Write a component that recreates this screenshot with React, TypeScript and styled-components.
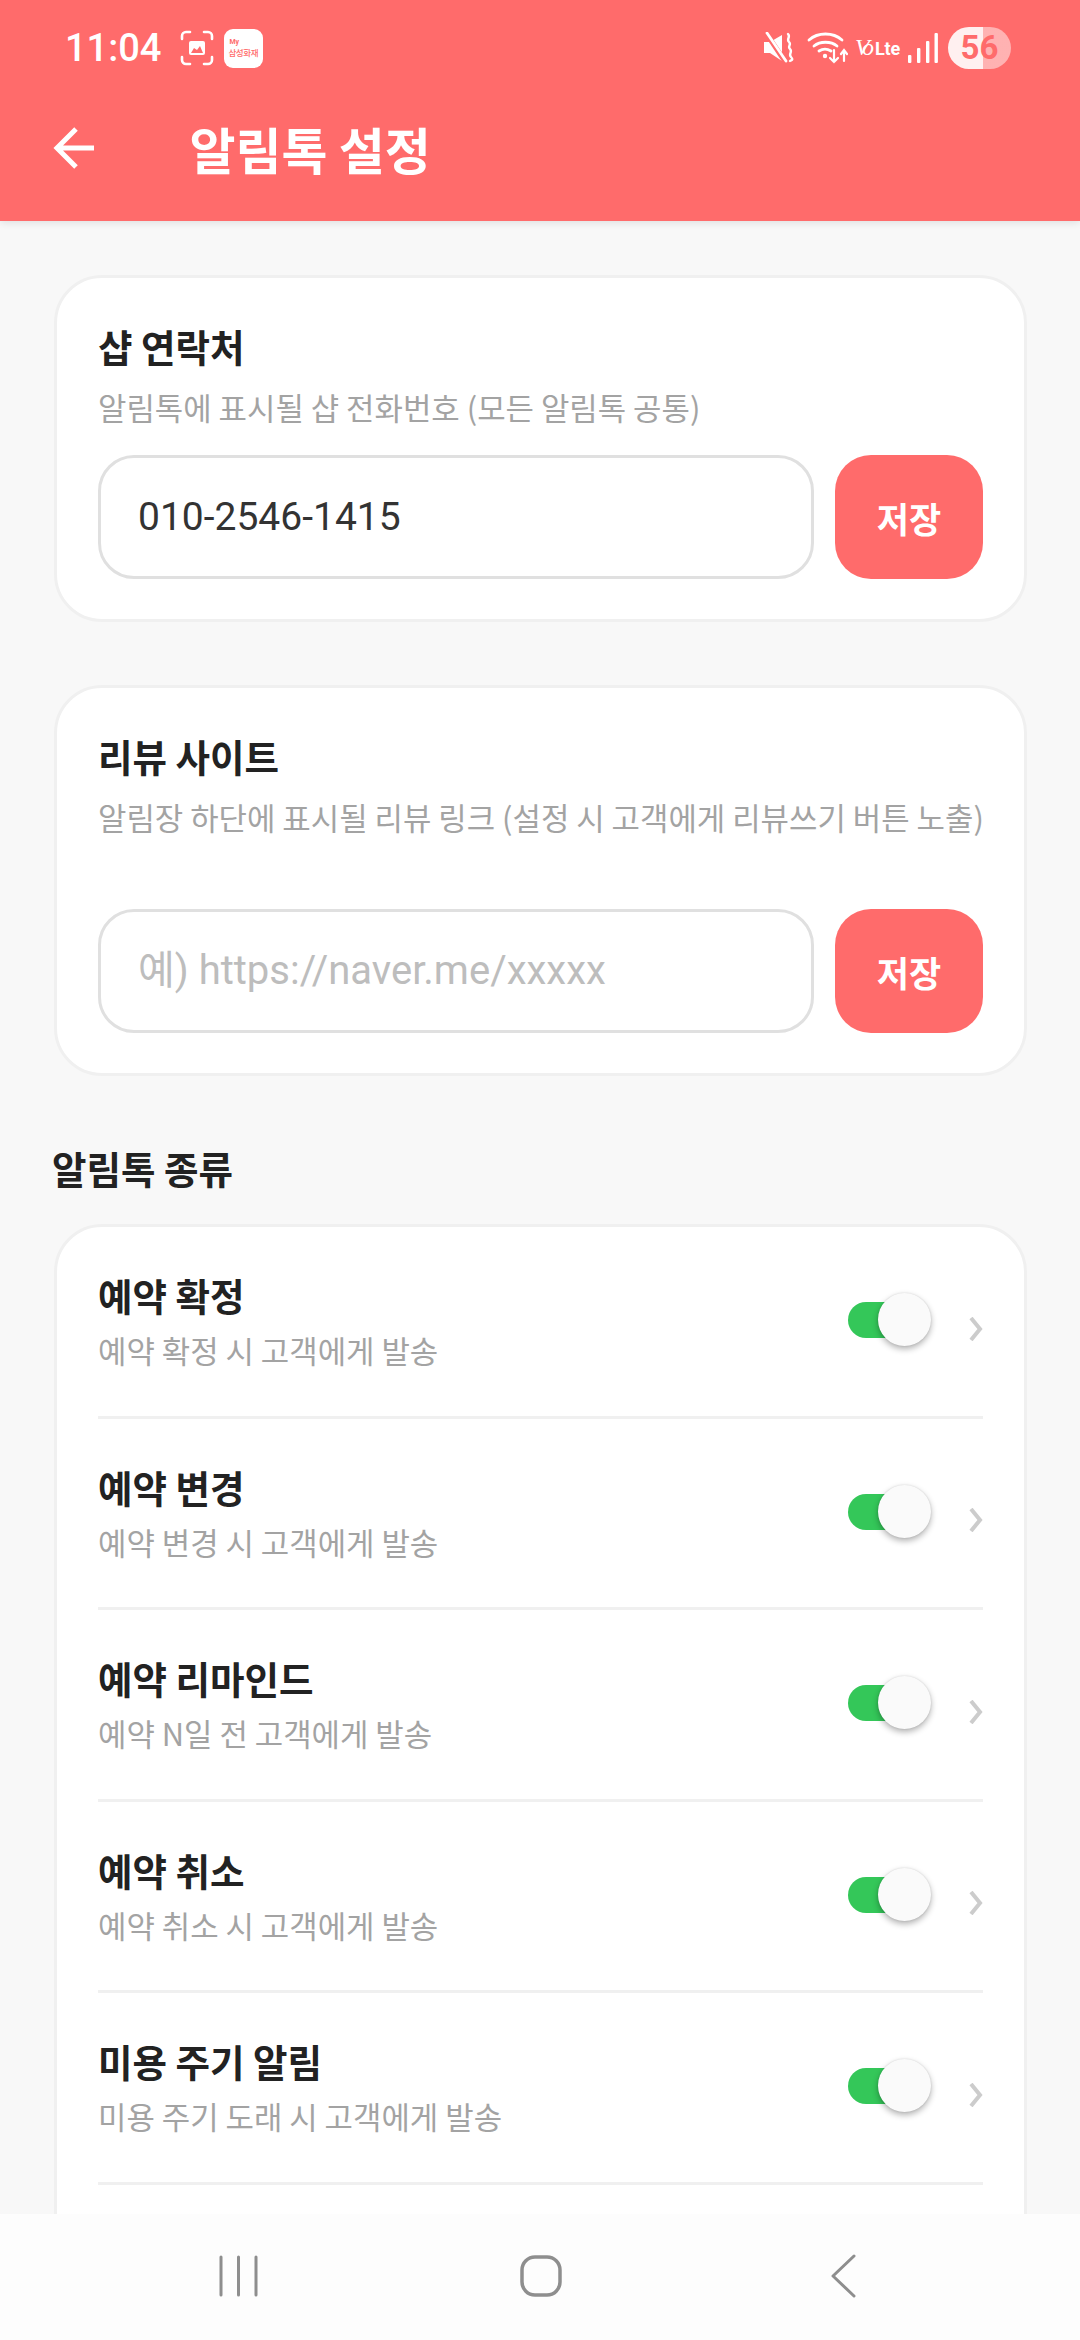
import styled, { createGlobalStyle } from "styled-components";

const CORAL = "#ff6b6b";
const KR = `"Noto Sans CJK KR", Roboto, sans-serif`;
const LATIN = `Roboto, "Noto Sans CJK KR", sans-serif`;

const GlobalStyle = createGlobalStyle`
  html, body {
    margin: 0;
    padding: 0;
    background: #f8f8f8;
  }
  * {
    box-sizing: border-box;
  }
`;

const Screen = styled.div`
  width: 1080px;
  height: 2340px;
  display: flex;
  flex-direction: column;
  overflow: hidden;
  background: #f8f8f8;
  font-family: ${KR};
`;

const Header = styled.header`
  flex: none;
  position: relative;
  z-index: 2;
  height: 221px;
  background: ${CORAL};
  color: #fff;
  box-shadow: 0 2px 8px rgba(0, 0, 0, 0.1);
`;

const StatusBar = styled.div`
  height: 96px;
  padding: 0 69px 0 65px;
  display: flex;
  align-items: center;
  justify-content: space-between;
`;

const StatusGroup = styled.div`
  display: flex;
  align-items: center;
`;

const Clock = styled.span`
  font: 500 38px/48px ${LATIN};
  margin-right: 19px;
`;

const AppBadge = styled.div`
  width: 39px;
  height: 39px;
  margin-left: 10px;
  border-radius: 9px;
  background: #fff;
  color: ${CORAL};
  display: flex;
  flex-direction: column;
  justify-content: center;
  padding-left: 4px;
`;

const BadgeMy = styled.span`
  font: 700 7px/8px ${LATIN};
  padding-left: 1px;
`;

const BadgeName = styled.span`
  font-size: 8.500px;
  font-weight: 500;
  line-height: 12px;
  letter-spacing: -0.4px;
  white-space: nowrap;
`;

const StatusSvg = styled.svg<{ $left?: number }>`
  flex: none;
  display: block;
  margin-left: ${(p) => p.$left ?? 0}px;
`;

const Volte = styled.span`
  flex: none;
  width: 42px;
  margin: 0 11px 0 7px;
  font: 700 18px/24px ${LATIN};
  white-space: nowrap;
  letter-spacing: -0.2px;
  em {
    font: italic 400 24px/24px "Liberation Serif", serif;
    letter-spacing: -5px;
    margin-right: 6px;
  }
`;

const Battery = styled.div`
  width: 63px;
  height: 42px;
  margin-left: 10px;
  border-radius: 21px;
  background: linear-gradient(90deg, rgba(255, 255, 255, 0.9) 55.500%, rgba(255, 255, 255, 0.48) 55.500%);
  color: ${CORAL};
  display: flex;
  align-items: center;
  justify-content: center;
  font: 700 33px/42px ${LATIN};
`;

const AppBar = styled.div`
  height: 103px;
  padding-left: 53px;
  display: flex;
  align-items: center;
  gap: 94.500px;
`;

const PageTitle = styled.h1`
  margin: 0;
  font-size: 50px;
  line-height: 70px;
  font-weight: 700;
  white-space: nowrap;
`;

const Content = styled.main`
  flex: 1;
  min-height: 0;
  overflow: hidden;
  padding: 54px 53px 0 54px;
`;

const Card = styled.section`
  background: #fff;
  border: 3px solid #f0f0f0;
  border-radius: 48px;
  padding: 44px 41px 40px;
  & + & {
    margin-top: 63px;
  }
`;

const CardTitle = styled.h2`
  margin: 0;
  font-size: 37.500px;
  line-height: 48px;
  font-weight: 700;
  color: #222;
`;

const CardHint = styled.p<{ $gap: number }>`
  margin: 15px 0 ${(p) => p.$gap}px;
  font-size: 30.900px;
  line-height: 44px;
  color: #a3a3a3;
  white-space: nowrap;
`;

const InputRow = styled.div`
  display: flex;
  gap: 21px;
`;

const TextInput = styled.input`
  flex: 1;
  min-width: 0;
  height: 124px;
  padding: 0 37px;
  border: 3px solid #e0e0e0;
  border-radius: 36px;
  outline: none;
  background: #fff;
  color: #333;
  font: 400 39px ${LATIN};
  &::placeholder {
    color: #bdbdbd;
    font-size: 40px;
    opacity: 1;
  }
`;

const SaveButton = styled.button`
  flex: none;
  width: 148px;
  height: 124px;
  border: 0;
  border-radius: 36px;
  background: ${CORAL};
  color: #fff;
  font: 700 35px ${KR};
`;

const SectionTitle = styled.h3`
  margin: 68px 0 32px -2px;
  font-size: 37.500px;
  line-height: 48px;
  font-weight: 700;
  color: #222;
`;

const ListCard = styled.section`
  background: #fff;
  border: 3px solid #f0f0f0;
  border-radius: 48px;
  padding: 0 41px 200px;
`;

const Row = styled.div`
  height: 191.500px;
  border-bottom: 3px solid #f0f0f0;
  display: flex;
  align-items: center;
`;

const RowText = styled.div`
  flex: 1;
  padding-top: 1px;
`;

const RowTitle = styled.div`
  font-size: 37.500px;
  line-height: 48px;
  font-weight: 700;
  color: #222;
`;

const RowHint = styled.div`
  margin-top: 9px;
  font-size: 30.900px;
  line-height: 44px;
  color: #a3a3a3;
`;

const Toggle = styled.div`
  position: relative;
  flex: none;
  width: 83px;
  height: 54px;
  margin: 0 38px 2px 0;
`;

const Track = styled.div`
  position: absolute;
  left: 0;
  top: 9px;
  width: 64px;
  height: 36px;
  border-radius: 18px;
  background: #34c759;
`;

const Thumb = styled.div`
  position: absolute;
  right: 0;
  top: 0;
  width: 53px;
  height: 53px;
  border-radius: 50%;
  background: #fafafa;
  box-shadow: 0 3px 6px rgba(0, 0, 0, 0.3), 0 0 2px rgba(0, 0, 0, 0.12);
`;

const Chevron = styled.svg`
  flex: none;
  margin-top: 15px;
`;

const NavBar = styled.nav`
  flex: none;
  position: relative;
  z-index: 2;
  height: 126px;
  background: #fdfdfd;
  padding-left: 88px;
  display: grid;
  grid-template-columns: 301px 303px 302px;
  justify-items: center;
  align-items: center;
`;

const NavIcon = styled.svg`
  display: block;
  margin-bottom: 2px;
`;

const rows = [
  ["예약 확정", "예약 확정 시 고객에게 발송"],
  ["예약 변경", "예약 변경 시 고객에게 발송"],
  ["예약 리마인드", "예약 N일 전 고객에게 발송"],
  ["예약 취소", "예약 취소 시 고객에게 발송"],
  ["미용 주기 알림", "미용 주기 도래 시 고객에게 발송"],
];

const ScreenshotIcon = () => (
  <StatusSvg width="34" height="36" viewBox="0 0 34 36" fill="none" stroke="#fff" strokeWidth="2.600" strokeLinecap="round">
    <path d="M2 9V6a4 4 0 0 1 4-4h4M24 2h4a4 4 0 0 1 4 4v3M32 27v3a4 4 0 0 1-4 4h-4M10 34H6a4 4 0 0 1-4-4v-3" />
    <path d="M9 13a2 2 0 0 1 2-2h12a2 2 0 0 1 2 2v10a2 2 0 0 1-2 2H11a2 2 0 0 1-2-2z" fill="#fff" stroke="none" />
    <path d="M11 23l3-5 3 2 3-4 3 7z" fill={CORAL} stroke="none" />
  </StatusSvg>
);

const MuteIcon = () => (
  <StatusSvg width="32" height="32" viewBox="0 0 32 32" fill="none">
    <path d="M1 10h6L19 3v26L7 21H1z" fill="#fff" />
    <path d="M3 1l18 27" stroke={CORAL} strokeWidth="5" />
    <path d="M4 1l19 28" stroke="#fff" strokeWidth="2.800" strokeLinecap="round" />
    <path d="M25 2c3 3-2 5 1 8s-2 4 1 7-2 5 1 8 0 3-1 4" stroke="#fff" strokeWidth="2.400" strokeLinecap="round" />
  </StatusSvg>
);

const WifiIcon = () => (
  <StatusSvg $left={12} width="41" height="32" viewBox="0 0 41 32" fill="none" stroke="#fff" strokeLinecap="round">
    <path d="M2 8c9-8 24-8 33 0" strokeWidth="2.800" />
    <path d="M7 14c6-5 17-5 23 0" strokeWidth="2.800" />
    <path d="M12 19c4-2.500 8-2.500 12 0" strokeWidth="2.800" />
    <circle cx="18" cy="24" r="2.200" fill="#fff" stroke="none" />
    <path d="M27 18v12M23 26l4 4 4-4" strokeWidth="2.200" />
    <path d="M37 29V18M34 22l3-4 3 4" strokeWidth="2.200" />
  </StatusSvg>
);

const SignalIcon = () => (
  <StatusSvg width="30" height="30" viewBox="0 0 30 30" fill="#fff">
    <rect x="0" y="22" width="3.400" height="8" rx="1" />
    <rect x="9" y="15" width="3.400" height="15" rx="1" />
    <rect x="18" y="8" width="3.400" height="22" rx="1" />
    <rect x="26.500" y="0" width="3.400" height="30" rx="1" />
  </StatusSvg>
);

const ArrowIcon = () => (
  <StatusSvg width="42" height="44" viewBox="0 0 42 44" fill="none" stroke="#fff" strokeWidth="5">
    <path d="M41 22H4M23 3L4 22l19 19" />
  </StatusSvg>
);

export default function App() {
  return (
    <Screen>
      <GlobalStyle />
      <Header>
        <StatusBar>
          <StatusGroup>
            <Clock>11:04</Clock>
            <ScreenshotIcon />
            <AppBadge>
              <BadgeMy>My</BadgeMy>
              <BadgeName>삼성화재</BadgeName>
            </AppBadge>
          </StatusGroup>
          <StatusGroup>
            <MuteIcon />
            <WifiIcon />
            <Volte>
              <em>Vo</em>Lte
            </Volte>
            <SignalIcon />
            <Battery>56</Battery>
          </StatusGroup>
        </StatusBar>
        <AppBar>
          <ArrowIcon />
          <PageTitle>알림톡 설정</PageTitle>
        </AppBar>
      </Header>
      <Content>
        <Card>
          <CardTitle>샵 연락처</CardTitle>
          <CardHint $gap={26}>알림톡에 표시될 샵 전화번호 (모든 알림톡 공통)</CardHint>
          <InputRow>
            <TextInput defaultValue="010-2546-1415" />
            <SaveButton>저장</SaveButton>
          </InputRow>
        </Card>
        <Card>
          <CardTitle>리뷰 사이트</CardTitle>
          <CardHint $gap={70}>알림장 하단에 표시될 리뷰 링크 (설정 시 고객에게 리뷰쓰기 버튼 노출)</CardHint>
          <InputRow>
            <TextInput placeholder="예) https://naver.me/xxxxx" />
            <SaveButton>저장</SaveButton>
          </InputRow>
        </Card>
        <SectionTitle>알림톡 종류</SectionTitle>
        <ListCard>
          {rows.map(([title, hint]) => (
            <Row key={title}>
              <RowText>
                <RowTitle>{title}</RowTitle>
                <RowHint>{hint}</RowHint>
              </RowText>
              <Toggle>
                <Track />
                <Thumb />
              </Toggle>
              <Chevron width="14" height="24" viewBox="0 0 14 24" fill="none" stroke="#cccccc" strokeWidth="4">
                <path d="M2 1l9 11-9 11" />
              </Chevron>
            </Row>
          ))}
        </ListCard>
      </Content>
      <NavBar>
        <NavIcon width="39" height="42" viewBox="0 0 39 42" fill="none" stroke="#8e8e8e" strokeWidth="3" strokeLinecap="round">
          <path d="M2 2v38M19.500 2v38M37 2v38" />
        </NavIcon>
        <NavIcon width="42" height="42" viewBox="0 0 42 42" fill="none" stroke="#8e8e8e" strokeWidth="3.500">
          <rect x="2" y="2" width="38" height="38" rx="13" />
        </NavIcon>
        <NavIcon width="26" height="44" viewBox="0 0 26 44" fill="none" stroke="#8e8e8e" strokeWidth="3" strokeLinecap="round" strokeLinejoin="round">
          <path d="M24 2L3 22l21 20" />
        </NavIcon>
      </NavBar>
    </Screen>
  );
}
